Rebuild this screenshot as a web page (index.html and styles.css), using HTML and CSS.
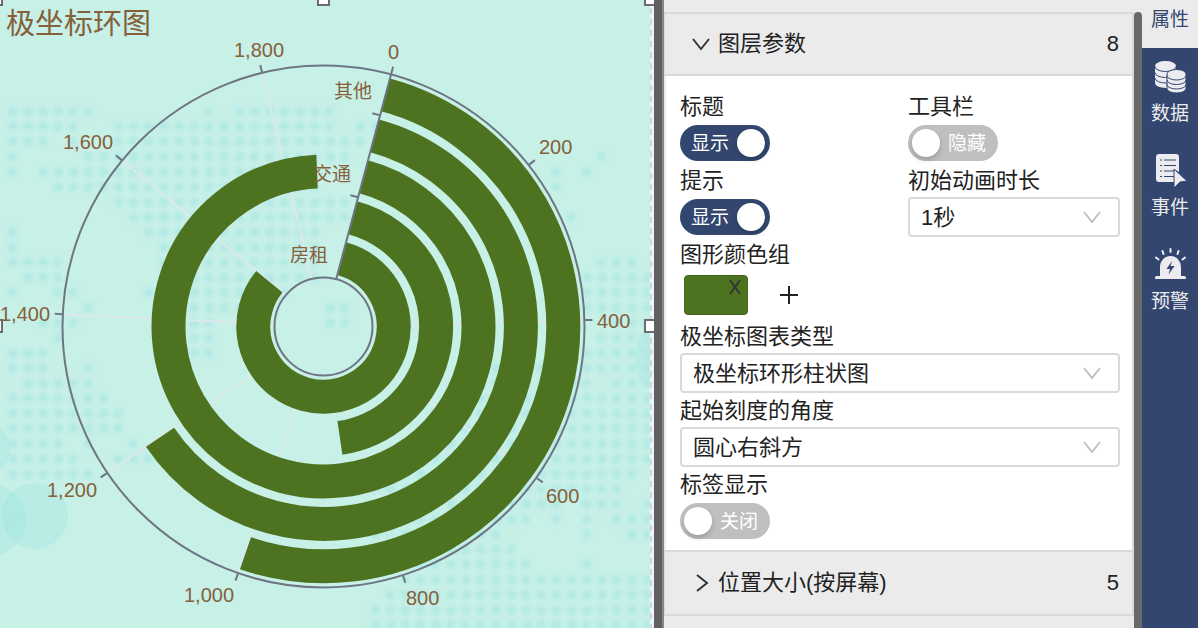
FILE: index.html
```html
<!DOCTYPE html>
<html lang="zh-CN">
<head>
<meta charset="utf-8">
<title>极坐标环图</title>
<link rel="stylesheet" href="styles.css">
</head>
<body>
<div class="editor">
  <main class="canvas">
    <svg class="chart" viewBox="0 0 654 628" role="img" aria-label="极坐标环图">
      <defs><filter id="soft" x="-5%" y="-5%" width="110%" height="110%"><feGaussianBlur stdDeviation="0.13"/></filter></defs>
      <g class="clouds">
        <circle cx="35" cy="516" r="33"/>
        <circle cx="-10" cy="520" r="36"/>
        <circle cx="-18" cy="449" r="28"/>
        <ellipse cx="645" cy="358" rx="9" ry="28"/>
      </g>
      <g transform="translate(8.7 111.5) scale(15.1)" filter="url(#soft)">
        <path class="dots" d="M0 0h5.5M13 0h.5M15 0h6.5M0 1h4.5M7 1h14.5M23 1h1.5M0 2h2.5M4 2h.5M7 2h16.5M0 3h.5M5 3h17.5M39 3h.5M0 4h.5M2 4h18.5M36 4h.5M38 4h.5M3 5h17.5M36 5h.5M7 6h15.5M8 7h14.5M37 7h.5M0 8h.5M9 8h11.5M0 9h.5M10 9h10.5M0 10h3.5M10 10h10.5M39 10h2.5M1 11h2.5M11 11h9.5M38 11h4.5M0 12h.5M3 12h1.5M9 12h9.5M38 12h4.5M5 13h.5M12 13h5.5M21 13h1.5M37 13h5.5M2 14h2.5M12 14h1.5M21 14h1.5M40 14h2.5M3 15h.5M12 15h1.5M39 15h3.5M0 16h2.5M12 16h1.5M38 16h4.5M0 17h2.5M5 17h.5M31 17h8.5M40 17h2.5M1 18h4.5M30 18h8.5M40 18h2.5M0 19h6.5M29 19h13.5M0 20h7.5M28 20h14.5M0 21h7.5M28 21h14.5M0 22h3.5M5 22h.5M8 22h.5M26 22h16.5M0 23h4.5M7 23h2.5M25 23h17.5M0 24h5.5M24 24h17.5M24 25h16.5M24 26h12.5M38 26h2.5M42 26h.5M24 27h10.5M36 27h.5M38 27h.5M40 27h2.5M24 28h8.5M38 28h.5M41 28h1.5M24 29h9.5M24 30h10.5M38 30h.5M26 31h16.5M25 32h17.5M24 33h18.5M24 34h18.5M0 27h.5"/>
      </g>
      <g transform="translate(323.5 326.5)">
        <g class="grid">
          <path d="M0-49V-261" transform="rotate(51.8)"/>
          <path d="M0-49V-261" transform="rotate(88.6)"/>
          <path d="M0-49V-261" transform="rotate(125.4)"/>
          <path d="M0-49V-261" transform="rotate(162.3)"/>
          <path d="M0-49V-261" transform="rotate(199.1)"/>
          <path d="M0-49V-261" transform="rotate(235.9)"/>
          <path d="M0-49V-261" transform="rotate(272.7)"/>
          <path d="M0-49V-261" transform="rotate(309.5)"/>
          <path d="M0-49V-261" transform="rotate(346.4)"/>
        </g>
        <!-- Bars start at the 0 axis: 15 degrees clockwise from the top -->
        <g class="bars" transform="rotate(-75)">
          <circle r="70.2" pathLength="360" stroke-dasharray="294.6 360"/>
          <circle r="112.6" pathLength="360" stroke-dasharray="156.6 360"/>
          <circle r="155" pathLength="360" stroke-dasharray="342.6 360"/>
          <circle r="197.4" pathLength="360" stroke-dasharray="220.9 360"/>
          <circle r="239.8" pathLength="360" stroke-dasharray="184 360"/>
        </g>
        <g class="axis">
          <circle r="49"/>
          <circle r="261"/>
          <path d="M0-49V-269M0-133.8h-8M0-218.6h-8" transform="rotate(15)"/>
          <path d="M0-261v-8" transform="rotate(51.8)"/>
          <path d="M0-261v-8" transform="rotate(88.6)"/>
          <path d="M0-261v-8" transform="rotate(125.4)"/>
          <path d="M0-261v-8" transform="rotate(162.3)"/>
          <path d="M0-261v-8" transform="rotate(199.1)"/>
          <path d="M0-261v-8" transform="rotate(235.9)"/>
          <path d="M0-261v-8" transform="rotate(272.7)"/>
          <path d="M0-261v-8" transform="rotate(309.5)"/>
          <path d="M0-261v-8" transform="rotate(346.4)"/>
        </g>
      </g>
      <g class="labels">
        <text class="title" x="6" y="34">极坐标环图</text>
        <text x="388" y="59">0</text>
        <text x="539" y="154">200</text>
        <text x="597" y="328">400</text>
        <text x="546" y="503">600</text>
        <text x="406" y="605">800</text>
        <text x="184" y="602">1,000</text>
        <text x="47" y="497">1,200</text>
        <text x="0" y="321">1,400</text>
        <text x="63" y="149">1,600</text>
        <text x="234" y="57">1,800</text>
        <text class="category" x="334" y="98">其他</text>
        <text class="category" x="313" y="181">交通</text>
        <text class="category" x="290" y="262">房租</text>
      </g>
      <g>
        <path class="edge" d="M652 0V628"/>
        <path class="dash" d="M651 8V628"/>
        <path class="handle" d="M-10-7H2V5H-10ZM318-7h11V5h-11ZM645-7h12V5h-12ZM-10 320H2v12H-10ZM645 320h12v12h-12Z"/>
      </g>
    </svg>
  </main>
  <div class="splitter"></div>
  <section class="panel">
    <button class="section-head" type="button" aria-expanded="true">
      <svg class="chevron" viewBox="0 0 18 18"><path d="M1 4 9 14 17 4"/></svg>
      <span class="section-name">图层参数</span><span>8</span>
    </button>
    <div class="fields">
      <div class="field">
        <label for="title">标题</label>
        <div class="control"><span class="switch"><input id="title" type="checkbox" role="switch" checked><span>显示</span></span></div>
      </div>
      <div class="field">
        <label for="toolbar">工具栏</label>
        <div class="control"><span class="switch"><input id="toolbar" type="checkbox" role="switch"><span>隐藏</span></span></div>
      </div>
      <div class="field">
        <label for="tip">提示</label>
        <div class="control"><span class="switch"><input id="tip" type="checkbox" role="switch" checked><span>显示</span></span></div>
      </div>
      <div class="field">
        <label for="duration">初始动画时长</label>
        <div class="control select"><select id="duration"><option>1秒</option></select><svg class="arrow" viewBox="0 0 18 18"><path d="M1 4 9 14 17 4"/></svg></div>
      </div>
      <div class="field wide">
        <span class="caption">图形颜色组</span>
        <div class="control colors">
          <div class="swatch"><button type="button" aria-label="删除颜色"><svg viewBox="0 0 12 16"><path d="M1 1 11 15M11 1 1 15"/></svg></button></div>
          <button class="add" type="button" aria-label="添加颜色"><svg viewBox="0 0 18 18"><path d="M9 0V18M0 9H18"/></svg></button>
        </div>
      </div>
      <div class="field wide">
        <label for="kind">极坐标图表类型</label>
        <div class="control select"><select id="kind"><option>极坐标环形柱状图</option></select><svg class="arrow" viewBox="0 0 18 18"><path d="M1 4 9 14 17 4"/></svg></div>
      </div>
      <div class="field wide">
        <label for="angle">起始刻度的角度</label>
        <div class="control select"><select id="angle"><option>圆心右斜方</option></select><svg class="arrow" viewBox="0 0 18 18"><path d="M1 4 9 14 17 4"/></svg></div>
      </div>
      <div class="field">
        <label for="tags">标签显示</label>
        <div class="control"><span class="switch"><input id="tags" type="checkbox" role="switch"><span>关闭</span></span></div>
      </div>
    </div>
    <button class="section-head" type="button" aria-expanded="false">
      <svg class="chevron" viewBox="0 0 18 18"><path d="M5 1 15 9 5 17"/></svg>
      <span class="section-name">位置大小(按屏幕)</span><span>5</span>
    </button>
  </section>
  <div class="scrollbar"></div>
  <nav class="tabs">
    <button class="tab active" type="button">属性</button>
    <button class="tab" type="button">
      <svg viewBox="0 0 34 34">
        <path class="fill" d="M2 6A10.500 5 0 0 1 23 6V23A10.500 5 0 0 1 2 23Z"/>
        <path class="cut" d="M2 6.500A10.500 5 0 0 0 23 6.500M2 12.500A10.500 5 0 0 0 23 12.500M2 18A10.500 5 0 0 0 23 18"/>
        <path class="fill gap" d="M14 14A9.500 4.500 0 0 1 33 14V28.500A9.500 4.500 0 0 1 14 28.500Z"/>
        <path class="cut" d="M14 15.500A9.500 4.500 0 0 0 33 15.500M14 20A9.500 4.500 0 0 0 33 20M14 24.500A9.500 4.500 0 0 0 33 24.500"/>
      </svg>数据
    </button>
    <button class="tab" type="button">
      <svg viewBox="0 0 34 34">
        <path class="fill" d="M6 0H23Q26 0 26 3V18L21 15V28H6Q3 28 3 25V3Q3 0 6 0Z"/>
        <path class="cut" d="M7 6h2M11 6h12M7 11.500h2M11 11.500h12M7 17h2M11 17h10M7 22.500h2M11 22.500h10"/>
        <path class="fill gap" d="M21 15 34 27 27 28 21 34Z"/>
      </svg>事件
    </button>
    <button class="tab" type="button">
      <svg viewBox="0 0 34 34">
        <path class="fill" d="M7 28V19A10.500 11 0 0 1 28 19V28H31.500Q33 28 33 31H2Q2 28 3.500 28Z"/>
        <path class="bolt" d="M19 13 13.500 21H17L15.500 26.500 21.500 18H17.500Z"/>
        <path class="ray" d="M17.500 1V4M9.500 3 10.500 6M25.500 3 24.500 6M3 9.500 5.500 11.500M32 9.500 29.500 11.500"/>
      </svg>预警
    </button>
  </nav>
</div>
</body>
</html>
```

FILE: styles.css
```css
* { box-sizing: border-box; }

body {
  margin: 0;
  font-family: "Liberation Sans", "Noto Sans CJK SC", sans-serif;
  font-size: 22px;
  color: #222;
  background: #ebebeb;
}

button, select, input { font: inherit; color: inherit; margin: 0; }
button { border: 0; background: none; padding: 0; }
svg { fill: none; flex: none; }

.editor { display: flex; min-height: 100vh; }

/* Chart canvas */
.canvas { flex: 1; min-width: 0; background: #c7f0e7; overflow: hidden; }
.chart { display: block; width: 100%; }
.clouds { fill: #9ee6e3; fill-opacity: .35; }
.dots { stroke: #aee8e5; stroke-opacity: .9; stroke-width: .54; stroke-dasharray: .54 .46; }
.grid { stroke: #dbe8ec; stroke-width: 2; }
.bars { stroke: #4d7320; stroke-width: 34; }
.axis { stroke: #6e7583; stroke-width: 2; }
.labels { fill: #85603a; font-size: 20px; }
.labels .category { font-size: 19px; }
.labels .title { font-size: 29px; }
.edge { stroke: #eaf4fb; stroke-width: 4; }
.dash { stroke: #d3d3d8; stroke-width: 2; stroke-dasharray: 6 5; }
.handle { fill: #fff; stroke: #6c6c70; stroke-width: 2; }

.splitter { width: 10px; background: #606060; border-right: 2px solid #868686; }

/* Property panel */
.panel {
  width: 470px;
  padding-top: 12px;
  background: #ebebeb;
}
.section-head {
  display: flex;
  align-items: center;
  gap: 8px;
  width: 100%;
  height: 64px;
  padding: 0 13px 0 27px;
  border: 2px solid #d9d9d9;
  border-left-width: 1px;
  line-height: 32px;
  text-align: left;
}
.section-name { flex: 1; }
.chevron { width: 18px; height: 18px; stroke: #333; stroke-width: 2; }
.fields + .section-head { height: 66px; }

.fields {
  display: grid;
  grid-template-columns: 1fr 1fr;
  column-gap: 16px;
  padding: 13px 12px 9px 14px;
  border-left: 2px solid #ebebeb;
  border-right: 2px solid #d9d9d9;
  background: #fff;
}
.field { display: flex; flex-direction: column; }
.wide { grid-column: 1 / -1; }
.field > label, .caption { height: 34px; line-height: 36px; }
.control { display: flex; align-items: center; height: 40px; }

.switch { position: relative; display: flex; width: 90px; height: 36px; }
.switch input {
  appearance: none;
  width: 100%;
  height: 100%;
  border-radius: 18px;
  background: #bfbfbf;
}
.switch input::before {
  content: "";
  display: block;
  width: 28px;
  height: 28px;
  margin: 4px;
  border-radius: 50%;
  background: #fff;
  box-shadow: 0 3px 5px rgba(0, 35, 11, .2);
}
.switch input:checked { background: #33466f; }
.switch input:checked::before { margin-left: 57px; }
.switch span {
  position: absolute;
  top: 0;
  right: 12px;
  line-height: 38px;
  font-size: 19px;
  color: #fff;
  pointer-events: none;
}
.switch input:checked + span { right: auto; left: 11px; }

.select { position: relative; }
.select select {
  appearance: none;
  width: 100%;
  height: 40px;
  padding: 0 48px 0 11px;
  border: 2px solid #d9d9d9;
  border-radius: 4px;
  background: #fff;
}
.arrow {
  position: absolute;
  right: 19px;
  width: 18px;
  height: 18px;
  stroke: #bfbfbf;
  stroke-width: 2;
  pointer-events: none;
}

.colors { gap: 32px; height: 48px; padding-left: 4px; }
.swatch {
  display: flex;
  justify-content: flex-end;
  align-items: flex-start;
  width: 64px;
  height: 40px;
  padding: 3px 6px;
  border: 1px solid #436918;
  border-radius: 4px;
  background: #4d7320;
}
.swatch button, .add { display: flex; }
.swatch svg { width: 12px; height: 16px; stroke: #333; stroke-width: 2; }
.add svg { width: 18px; height: 18px; stroke: #222; stroke-width: 2; }

.scrollbar { width: 8px; margin-top: 12px; border-radius: 4px 4px 0 0; background: #696969; }

/* Side tabs */
.tabs { width: 56px; background: #33466f; color: #ececf0; }
.tab {
  display: flex;
  flex-direction: column;
  align-items: center;
  gap: 6px;
  width: 100%;
  padding: 12px 0 14px;
  font-size: 19px;
  line-height: 28px;
}
.tab.active { padding-top: 6px; background: #ebebeb; color: #33466f; }
.tab svg { width: 34px; height: 34px; }
.fill { fill: #ececf0; }
.cut { stroke: #33466f; stroke-width: 1; }
.gap { stroke: #33466f; stroke-width: 1; }
.bolt { fill: #33466f; }
.ray { stroke: #ececf0; stroke-width: 2; stroke-linecap: round; }
```
